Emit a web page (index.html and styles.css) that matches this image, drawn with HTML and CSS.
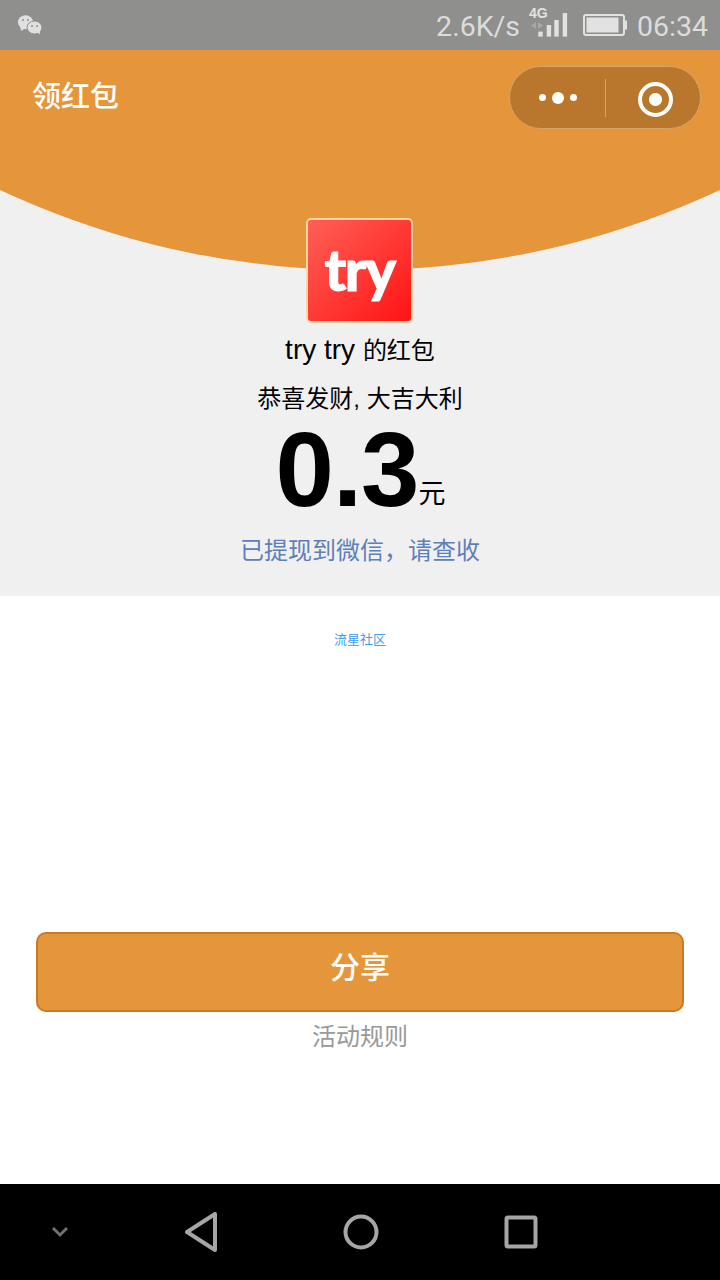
FILE: index.html
```html
<!DOCTYPE html>
<html>
	<head>
		<meta charset="utf-8">
		<title>领红包</title>
		<link rel="stylesheet" href="styles.css">
	</head>
	<body>
		<div id="box">
			<!--状态栏-->
			<div class="status">
				<svg class="wechat" width="24" height="20" viewBox="0 0 24 20">
					<ellipse cx="7.500" cy="7.200" rx="7.500" ry="7" fill="#e0e0e0"/>
					<path d="M2.500 11.500L3 16l4-2.500z" fill="#e0e0e0"/>
					<ellipse cx="16.500" cy="12.500" rx="7.500" ry="6.500" fill="#e0e0e0" stroke="#8f8f8d"/>
					<path d="M19.500 17.500l2.300 2 .2-4z" fill="#e0e0e0"/>
					<circle cx="5" cy="5" r="1" fill="#8f8f8d"/>
					<circle cx="10" cy="5" r="1" fill="#8f8f8d"/>
					<circle cx="14" cy="11" r="1" fill="#8f8f8d"/>
					<circle cx="19" cy="11" r="1" fill="#8f8f8d"/>
				</svg>
				<div class="status-right">
					<span class="speed">2.6K/s</span>
					<svg class="signal" width="40" height="38" viewBox="0 0 40 38">
						<text x="0" y="12" class="net">4G</text>
						<path d="M7 16v7l-5-3.500zM9 16v7l5-3.500z" fill="#a8a8a8"/>
						<rect x="9.300" y="25.600" width="4.400" height="5" fill="#e2e2e2"/>
						<rect x="17.700" y="19" width="4.400" height="11.600" fill="#e2e2e2"/>
						<rect x="25.300" y="14" width="4.400" height="16.600" fill="#e2e2e2"/>
						<rect x="33.700" y="7" width="4.400" height="23.600" fill="#e2e2e2"/>
					</svg>
					<svg class="battery" width="44" height="22" viewBox="0 0 44 22">
						<rect x="1" y="1" width="40" height="20" rx="2" fill="none" stroke="#e2e2e2" stroke-width="2"/>
						<rect x="3.500" y="3.500" width="32" height="15" fill="#e2e2e2"/>
						<rect x="42" y="6.500" width="2" height="9" fill="#e2e2e2"/>
					</svg>
					<span class="time">06:34</span>
				</div>
			</div>

			<!--红包信息-->
			<div class="hero">
				<div class="head">
					<h3 class="title">领红包</h3>
					<div class="capsule">
						<div class="more">
							<i class="dot"></i>
							<i class="dot big"></i>
							<i class="dot"></i>
						</div>
						<div class="line"></div>
						<div class="close">
							<i class="ring"></i>
						</div>
					</div>
				</div>
				<div class="logo">try</div>
				<p class="name">try try <span class="from">的红包</span></p>
				<p class="wish">恭喜发财, 大吉大利</p>
				<p class="amount">0.3<span class="unit">元</span></p>
				<p class="tip">已提现到微信，请查收</p>
			</div>

			<a href="#" class="site">流星社区</a>

			<!--按钮-->
			<a href="#" class="share">分享</a>
			<a href="#" class="rule">活动规则</a>

			<!--导航栏-->
			<div class="nav">
				<svg class="nav-down" width="20" height="14" viewBox="0 0 20 14">
					<path d="M3 3l7 7 7-7" fill="none" stroke="#6f6f6f" stroke-width="3"/>
				</svg>
				<svg class="nav-back" width="34" height="40" viewBox="0 0 34 40">
					<path d="M31 2v36L3 20z" fill="none" stroke="#a6a6a6" stroke-width="4" stroke-linejoin="round"/>
				</svg>
				<svg class="nav-home" width="36" height="36" viewBox="0 0 36 36">
					<circle cx="18" cy="18" r="15.500" fill="none" stroke="#a6a6a6" stroke-width="4"/>
				</svg>
				<svg class="nav-recent" width="34" height="34" viewBox="0 0 34 34">
					<rect x="2.500" y="2.500" width="29" height="29" rx="1.500" fill="none" stroke="#a6a6a6" stroke-width="4"/>
				</svg>
			</div>
		</div>
	</body>
</html>
```

FILE: styles.css
```css
* {
	margin: 0;
	padding: 0;
}

body {
	background: white;
	font-family: "Liberation Sans", "Noto Sans CJK SC", sans-serif;
}

a {
	text-decoration: none;
}

#box {
	width: 720px;
	height: 1280px;
	display: flex;
	flex-direction: column;
	overflow: hidden;
}

.status {
	height: 50px;
	flex: none;
	background: #8f8f8d;
	display: flex;
	justify-content: space-between;
	align-items: center;
	padding: 0 12px 0 18px;
	font-family: Roboto, sans-serif;
	font-size: 28.5px;
	color: #dcdcdc;
}

.status-right {
	display: flex;
	align-items: center;
}

.status .speed,
.status .time {
	padding-top: 2px;
}

.status .speed {
	margin-right: 9px;
}

.status .signal {
	margin-right: 14px;
}

.status .battery {
	margin-right: 10px;
}

.status .net {
	font-family: "Liberation Sans", sans-serif;
	font-weight: bold;
	font-size: 14px;
	fill: #e2e2e2;
}

.hero {
	height: 546px;
	flex: none;
	background: #f0f0f0;
	position: relative;
	overflow: hidden;
	display: flex;
	flex-direction: column;
	align-items: center;
	text-align: center;
}

/* 橙色弧形背景 */
.hero::before {
	content: "";
	position: absolute;
	left: -490px;
	bottom: 326px;
	width: 1700px;
	height: 1700px;
	border-radius: 50%;
	background: #e5963b;
}

.head {
	position: relative;
	width: 100%;
	box-sizing: border-box;
	display: flex;
	justify-content: space-between;
	align-items: flex-start;
	padding: 16px 19px 0 32px;
}

.head .title {
	color: white;
	font-size: 29px;
	font-weight: 500;
	line-height: 62px;
}

.capsule {
	width: 192px;
	height: 63px;
	box-sizing: border-box;
	background: #b8772d;
	border: 1px solid #d6a469;
	border-radius: 32px;
	display: flex;
	align-items: center;
}

.capsule .more {
	width: 95px;
	display: flex;
	justify-content: center;
	align-items: center;
	gap: 6px;
}

.capsule .dot {
	width: 7px;
	height: 7px;
	border-radius: 50%;
	background: white;
}

.capsule .big {
	width: 12px;
	height: 12px;
}

.capsule .line {
	width: 1px;
	height: 38px;
	background: #d6a469;
}

.capsule .close {
	flex: 1;
	display: flex;
	justify-content: center;
	padding: 4px 0 0 4px;
}

.capsule .ring {
	width: 35px;
	height: 35px;
	box-sizing: border-box;
	border: 4px solid white;
	border-radius: 50%;
	background: radial-gradient(circle, white 0 6px, transparent 7px);
}

.logo {
	position: relative;
	flex: none;
	width: 107px;
	height: 105px;
	box-sizing: border-box;
	margin: 89px 1px 0 0;
	border: 2px solid #fdd8a4;
	border-radius: 5px;
	background: linear-gradient(135deg, #ff5f57, #ff1414);
	color: white;
	font-family: Lato, sans-serif;
	font-weight: 900;
	font-size: 58px;
	line-height: 97px;
	letter-spacing: -1.5px;
	-webkit-text-stroke: 1px white;
}

.name {
	position: relative;
	margin-top: 7px;
	font-size: 28px;
	line-height: 40px;
	color: black;
}

.name .from {
	font-size: 24px;
}

.wish {
	margin-top: 8px;
	font-size: 24px;
	line-height: 40px;
	color: black;
}

.amount {
	font-size: 105px;
	font-weight: bold;
	line-height: 102px;
	letter-spacing: -1px;
	color: black;
	margin-left: 1px;
}

.amount .unit {
	font-size: 27px;
	font-weight: normal;
	line-height: 1;
	letter-spacing: 0;
	vertical-align: 3px;
}

.tip {
	font-size: 24px;
	line-height: 40px;
	color: #5f7fb8;
	margin-top: 10px;
}

.site {
	margin-top: 36px;
	font-size: 13px;
	line-height: 16px;
	color: #3ba0f0;
	text-align: center;
}

.share {
	display: block;
	flex: none;
	box-sizing: border-box;
	width: 648px;
	height: 80px;
	margin: 284px auto 0;
	background: #e5963b;
	border: 2px solid #c87a25;
	border-radius: 10px;
	color: white;
	font-size: 30px;
	font-weight: 500;
	line-height: 68px;
	text-align: center;
}

.rule {
	margin-top: 5px;
	font-size: 24px;
	line-height: 40px;
	color: #999;
	text-align: center;
}

.nav {
	margin-top: auto;
	height: 96px;
	flex: none;
	background: black;
	display: flex;
	align-items: center;
	padding-left: 50px;
}

.nav-back {
	margin-left: 114px;
}

.nav-home {
	margin-left: 125px;
}

.nav-recent {
	margin-left: 125px;
}
```
